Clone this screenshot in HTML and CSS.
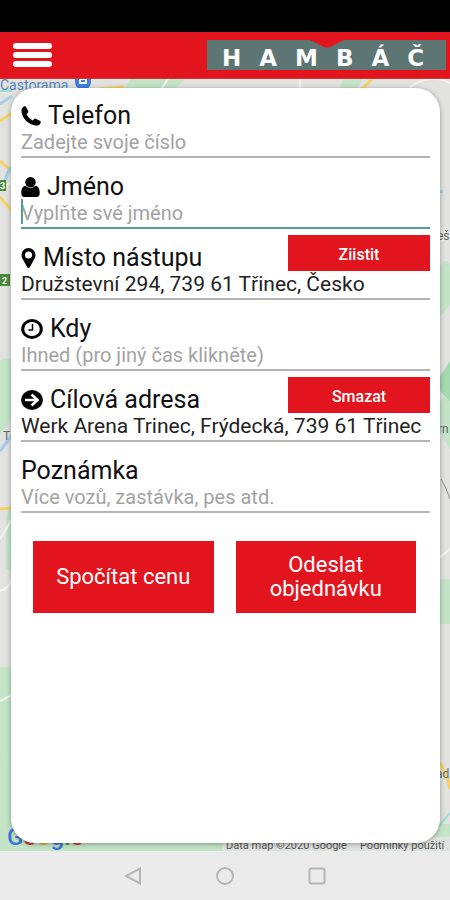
FILE: index.html
```html
<!DOCTYPE html>
<html lang="cs">
<head>
<meta charset="utf-8">
<meta name="viewport" content="width=device-width, initial-scale=1">
<title>Hambáč</title>
<link rel="stylesheet" href="styles.css">
</head>
<body>
<div class="status"></div>
<header class="header">
  <button class="menu" type="button" aria-label="Menu"><span></span><span></span><span></span></button>
  <div class="logo">
    <svg class="notch" viewBox="0 0 34 8" aria-hidden="true"><path d="M0 0H34L20 7Q17 8.500 14 7Z" fill="#e2141d"/></svg>
    <span class="logo-text">HAMBÁČ</span>
  </div>
</header>
<main class="stage">
  <svg class="map" viewBox="0 0 450 772" preserveAspectRatio="xMidYMid slice" aria-hidden="true">
    <rect width="450" height="772" fill="#e2e3e0"/>
    <g fill="#c3e4c6">
      <path d="M130 0h55l-12 12h-50zM343 0h20l-8 12h-16zM0 282q8-6 12 0v58l-12 16zM6 442q2-16 6-16v66l-6-2zM0 588h12v184H0zM438 190q8-14 12-4v40l-12 14zM438 325l12-15v60l-12-20zM440 500h10v45h-10z"/>
      <path d="M0 675l20 70h430v27H0z"/>
    </g>
    <path d="M438 300l12-18v40l-12-12z" fill="#a5d9ae"/>
    <g fill="none" stroke="#f4f4f1" stroke-width="2">
      <path d="M300 0v12M160 12l8-12M0 112l12-10M0 512q12-4 12-14M0 622l12-6M436 165l14-8M410 8q20-14 40-4M438 480l12-10M0 460l12-20"/>
    </g>
    <g fill="none" stroke="#f5d267" stroke-width="3">
      <path d="M0 42l12-8M0 82l12 10M0 118l12 14M98 10l26-2M360 12l12-12M0 430l12-1M440 684q8 14 10 26"/>
    </g>
    <g fill="none" stroke="#a4cdea" stroke-width="3">
      <path d="M0 25l12-8M4 110q2-18 8-22M0 372l12-16M438 112l5 1"/>
    </g>
    <path d="M0 12h12M438 748l12-14" stroke="#9eddd0" stroke-width="2" fill="none"/>
    <path d="M441 400q6 10 9 20" stroke="#8a8a8a" fill="none"/>
    <g class="map-label">
      <text class="place" x="0" y="11">Castorama</text>
      <text x="437" y="161">eš</text>
      <text x="438" y="354">rn</text>
      <text x="3" y="361">T</text>
      <text x="436" y="699">ad</text>
    </g>
    <path d="M75 0h16v3a8 8 0 0 1-16 0z" fill="#3b82df"/>
    <path d="M79 0h8v5h-8z" fill="#fff"/><path d="M81 1h4v2h-4z" fill="#3b82df"/>
    <rect y="101" width="6" height="11" fill="#4b8a38"/>
    <rect y="195" width="10" height="12" fill="#4b8a38"/>
    <text class="shield" x="0" y="110">3</text>
    <text class="shield" x="2" y="205">2</text>
    <text class="google" x="7" y="766"><tspan fill="#3b78d8">G</tspan><tspan fill="#d33b30">o</tspan><tspan fill="#e6b420">o</tspan><tspan fill="#3b78d8">g</tspan><tspan fill="#3b9b55">l</tspan><tspan fill="#d33b30">e</tspan></text>
    <rect x="222" y="758" width="228" height="14" fill="#dfe3df"/>
    <g class="credit"><text x="226" y="770">Data map ©2020 Google</text><text x="360" y="770">Podmínky použití</text></g>
  </svg>
  <form class="card">
    <div class="field">
      <div class="head">
        <label for="tel"><svg width="20" height="20" viewBox="0 0 20 20" aria-hidden="true"><path d="M4.800.6 7.300 5.300Q7.600 6.200 6.900 6.800L5.500 8.200Q7.500 12.300 11.700 14.400L13.200 12.900Q14 12.300 14.800 12.700L19.200 15Q20 15.500 19.700 16.400 18.600 19.800 15 19.600C7.500 18.900.8 12 .4 5Q.3 1.300 3.600.2 4.400 0 4.800.6Z"/></svg>Telefon</label>
      </div>
      <input id="tel" type="tel" placeholder="Zadejte svoje číslo">
    </div>
    <div class="field active">
      <div class="head">
        <label for="name"><svg width="19" height="20" viewBox="0 0 19 20" aria-hidden="true"><ellipse cx="9.500" cy="5.200" rx="5.200" ry="5.200"/><path d="M4.500 8.800Q9.500 13.600 14.500 8.800C18 9.300 18.800 13 18.700 16.500Q18.500 20 15.500 20h-12Q.5 20 .3 16.500C.2 13 1 9.300 4.500 8.800Z"/></svg>Jméno</label>
      </div>
      <input id="name" type="text" placeholder="Vyplňte své jméno">
    </div>
    <div class="field">
      <div class="head">
        <label for="from"><svg width="15" height="20" viewBox="0 0 15 20" aria-hidden="true"><path fill-rule="evenodd" d="M7.500 0A7 7 0 0 1 14.500 7Q14.500 9 13.600 10.600L8.800 19.200Q7.500 20.800 6.200 19.200L1.400 10.600Q.5 9 .5 7A7 7 0 0 1 7.500 0ZM7.500 3.600a3.500 3.500 0 1 0 0 7 3.500 3.500 0 0 0 0-7Z"/></svg>Místo nástupu</label>
        <button class="btn small" type="button">Ziistit</button>
      </div>
      <input id="from" type="text" value="Družstevní 294, 739 61 Třinec, Česko">
    </div>
    <div class="field">
      <div class="head">
        <label for="when"><svg width="22" height="20" viewBox="0 0 22 20" aria-hidden="true"><ellipse cx="11" cy="10" rx="9.300" ry="8.500" fill="none" stroke="#000" stroke-width="3"/><path d="M11.500 5v6H7.500" fill="none" stroke="#000" stroke-width="1.500"/></svg>Kdy</label>
      </div>
      <input id="when" type="text" placeholder="Ihned (pro jiný čas klikněte)">
    </div>
    <div class="field">
      <div class="head">
        <label for="to"><svg width="22" height="20" viewBox="0 0 22 20" aria-hidden="true"><ellipse cx="11" cy="10" rx="10.800" ry="10"/><path d="M4 10h12M10.500 4.500 16.500 10l-6 5.500" fill="none" stroke="#fff" stroke-width="2.600"/></svg>Cílová adresa</label>
        <button class="btn small" type="button">Smazat</button>
      </div>
      <input id="to" type="text" value="Werk Arena Trinec, Frýdecká, 739 61 Třinec">
    </div>
    <div class="field">
      <div class="head"><label for="note">Poznámka</label></div>
      <input id="note" type="text" placeholder="Více vozů, zastávka, pes atd.">
    </div>
    <div class="actions">
      <button class="btn" type="button">Spočítat cenu</button>
      <button class="btn" type="submit">Odeslat objednávku</button>
    </div>
  </form>
</main>
<nav class="nav">
  <button type="button" aria-label="Zpět"><svg width="18" height="18" viewBox="0 0 18 18"><path d="M16 1.500v15L2 9Z"/></svg></button>
  <button type="button" aria-label="Domů"><svg width="18" height="18" viewBox="0 0 18 18"><circle cx="9" cy="9" r="8"/></svg></button>
  <button type="button" aria-label="Přehled"><svg width="18" height="18" viewBox="0 0 18 18"><rect x="1.500" y="1.500" width="15" height="15" rx="2"/></svg></button>
</nav>
</body>
</html>
```
FILE: styles.css
```css
* { box-sizing: border-box; }
body {
  margin: 0;
  min-height: 100vh;
  display: flex;
  flex-direction: column;
  font-family: Roboto, "Liberation Sans", sans-serif;
  color: #111;
  background: #ebebeb;
}
button, input { font: inherit; border: 0; border-radius: 0; }
.status { height: 32px; background: #000; }
.header {
  height: 47px;
  padding: 0 4px 0 13px;
  display: flex;
  align-items: center;
  justify-content: space-between;
  background: #e2141d;
  border-bottom: 1px solid #c9383a;
}
.menu {
  width: 39px;
  padding: 0;
  display: grid;
  gap: 3px;
  background: none;
}
.menu span { height: 6px; border-radius: 3px; background: #fff; }
.logo {
  position: relative;
  width: 239px;
  height: 30px;
  padding-left: 15px;
  background: #5d7573;
  color: #fff;
}
.notch { position: absolute; top: 0; left: 50%; width: 34px; height: 8px; margin-left: -17px; }
.logo-text {
  display: block;
  font: bold 23px/37px "DejaVu Sans", sans-serif;
  letter-spacing: 18px;
  white-space: nowrap;
}
.stage {
  position: relative;
  flex: 1;
  display: flex;
  padding: 9px 10px 8px 11px;
}
.map { position: absolute; inset: 0; width: 100%; height: 100%; }
.map-label { font-size: 12px; fill: #666; }
.place { font-size: 14px; fill: #4f87bd; }
.shield { font-size: 9px; font-weight: bold; fill: #fff; }
.google { font-size: 24px; font-weight: 500; }
.credit { font-size: 11px; fill: #555; }
.card {
  position: relative;
  flex: 1;
  min-width: 0;
  padding: 0 10px;
  border-radius: 24px;
  background: #fff;
  box-shadow: 0 1px 5px rgba(0, 0, 0, .35);
}
.field { position: relative; padding-top: 5px; }
.field + .field { padding-top: 6px; }
.head {
  height: 36px;
  display: flex;
  align-items: flex-end;
  justify-content: space-between;
}
label {
  display: flex;
  align-items: center;
  gap: 7px;
  font-size: 25px;
  line-height: 26px;
}
label svg { fill: #000; }
input {
  display: block;
  width: 100%;
  height: 29px;
  padding: 0 0 1px;
  border-bottom: 2px solid #b5b5b5;
  outline: 0;
  background: none;
  color: #222;
  font-size: 21px;
}
input::placeholder { color: #a3a3a3; font-size: 20px; opacity: 1; }
.active input { border-bottom-color: #559c93; }
.active::before {
  content: "";
  position: absolute;
  left: 0;
  bottom: 5px;
  width: 2px;
  height: 25px;
  background: #559c93;
}
.btn {
  padding: 0 20px;
  background: #e2141d;
  color: #fff;
  font-size: 22px;
  line-height: 24px;
}
.small {
  width: 142px;
  height: 36px;
  padding: 4px 0 0;
  font-size: 16px;
  font-weight: 500;
}
.actions {
  display: grid;
  grid-template-columns: 1fr 1fr;
  grid-auto-rows: 72px;
  gap: 22px;
  margin: 28px 14px 28px 12px;
}
.nav {
  height: 49px;
  display: flex;
  justify-content: center;
  align-items: center;
  gap: 74px;
  background: #ebebeb;
}
.nav button { display: flex; padding: 0; background: none; }
.nav svg { fill: none; stroke: #b5b5b5; stroke-width: 2; }
```
